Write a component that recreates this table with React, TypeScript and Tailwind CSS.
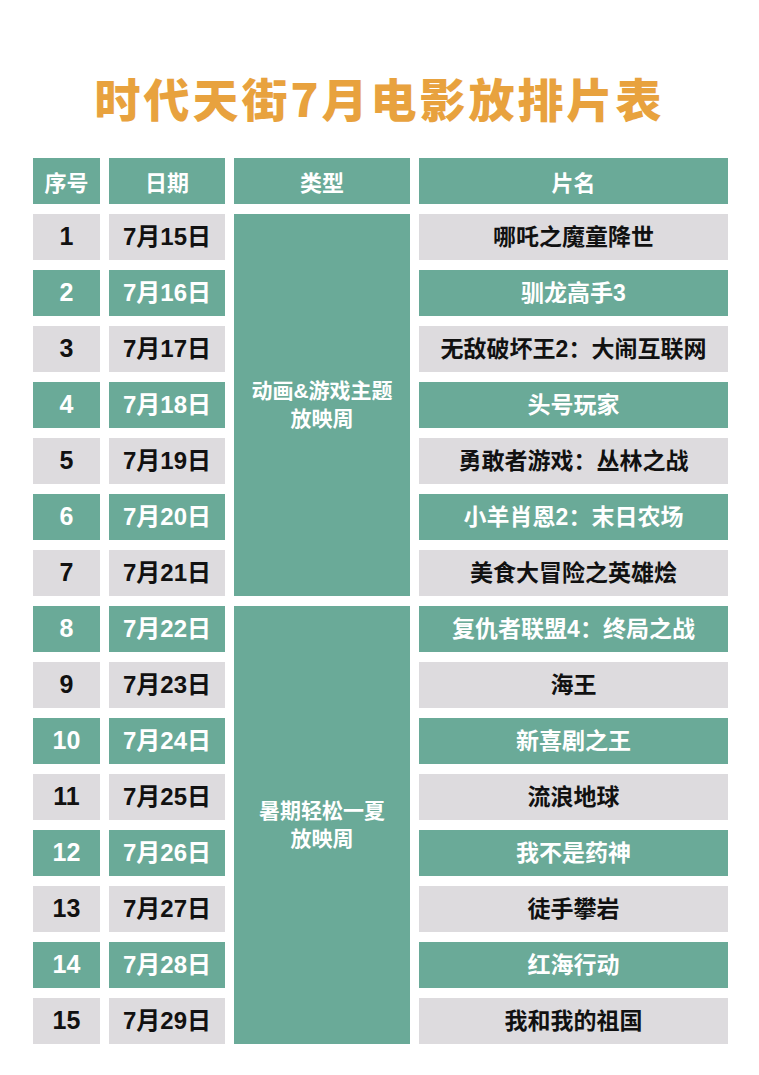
const movies = [
  { date: "7月15日", name: "哪吒之魔童降世" },
  { date: "7月16日", name: "驯龙高手3" },
  { date: "7月17日", name: "无敌破坏王2：大闹互联网" },
  { date: "7月18日", name: "头号玩家" },
  { date: "7月19日", name: "勇敢者游戏：丛林之战" },
  { date: "7月20日", name: "小羊肖恩2：末日农场" },
  { date: "7月21日", name: "美食大冒险之英雄烩" },
  { date: "7月22日", name: "复仇者联盟4：终局之战" },
  { date: "7月23日", name: "海王" },
  { date: "7月24日", name: "新喜剧之王" },
  { date: "7月25日", name: "流浪地球" },
  { date: "7月26日", name: "我不是药神" },
  { date: "7月27日", name: "徒手攀岩" },
  { date: "7月28日", name: "红海行动" },
  { date: "7月29日", name: "我和我的祖国" },
];

export default function App() {
  return (
    <div className="w-[759px] min-h-[1075px] bg-white font-['Liberation_Sans','Noto_Sans_CJK_SC',sans-serif]">
      <h1 className="pt-[72px] text-center text-[46px] leading-[50px] font-black tracking-[3px] text-[#e8a23e] font-['Noto_Sans_CJK_SC',sans-serif]">
        时代天街7月电影放排片表
      </h1>

      {/* table: type column cells are placed explicitly, everything else auto-flows */}
      <div className="mt-[36px] ml-[33px] grid grid-cols-[67px_116px_176px_309px] auto-rows-[46px] gap-x-[9px] gap-y-[10px]">
        <div className="col-start-3 row-start-2 row-span-7 flex flex-col items-center justify-center bg-[#6aaa98] text-[21px] leading-[28px] font-bold text-white">
          <span>动画&amp;游戏主题</span>
          <span>放映周</span>
        </div>
        <div className="col-start-3 row-start-9 row-span-8 flex flex-col items-center justify-center bg-[#6aaa98] text-[21px] leading-[28px] font-bold text-white">
          <span>暑期轻松一夏</span>
          <span>放映周</span>
        </div>

        {["序号", "日期", "类型", "片名"].map((h) => (
          <div
            key={h}
            className="row-start-1 flex items-center justify-center bg-[#6aaa98] text-[22px] font-bold text-white font-['Noto_Sans_CJK_SC',sans-serif]"
          >
            {h}
          </div>
        ))}

        {movies.map((m, i) => {
          const cell =
            i % 2 === 1
              ? "bg-[#6aaa98] text-white"
              : "bg-[#dddbde] text-[#111111]";
          return [
            <div
              key={`n${i}`}
              className={`flex items-center justify-center text-[25px] font-bold ${cell}`}
            >
              {i + 1}
            </div>,
            <div
              key={`d${i}`}
              className={`flex items-center justify-center text-[24px] font-bold ${cell}`}
            >
              {m.date}
            </div>,
            <div
              key={`m${i}`}
              className={`col-start-4 flex items-center justify-center text-[23px] font-bold ${cell}`}
            >
              {m.name}
            </div>,
          ];
        })}
      </div>
    </div>
  );
}
